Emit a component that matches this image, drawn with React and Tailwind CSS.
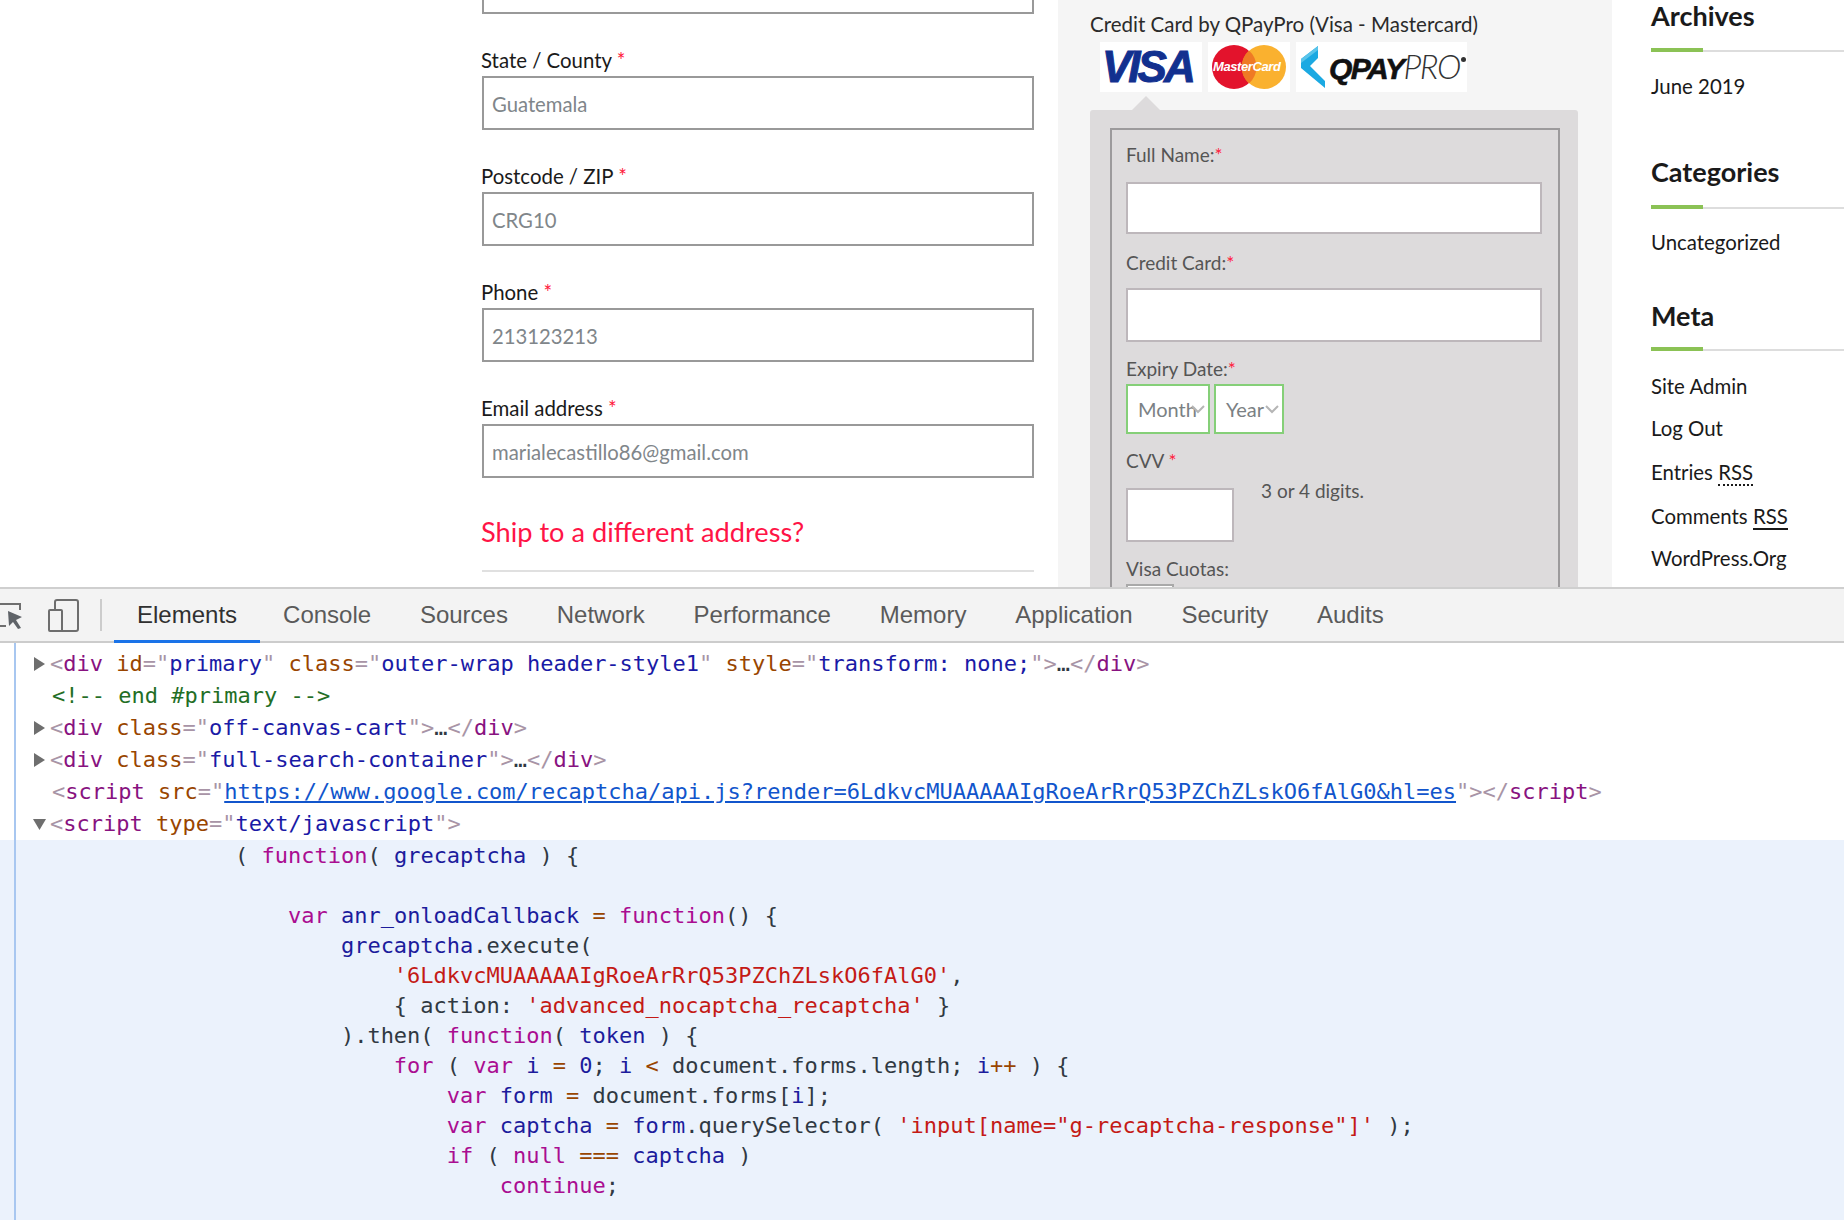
import React from "react";

/* ================= DEVTOOLS SOURCE ================= */
const TOKEN = {
  b: "text-[#a894a6]",
  t: "text-[#881280]",
  a: "text-[#994500]",
  v: "text-[#1a1aa6]",
  u: "text-[#1155cc] underline",
  c: "text-[#236e25]",
  p: "text-[#303942]",
  k: "text-[#aa0d91]",
  d: "text-[#1c1c9c]",
  s: "text-[#c41a16]",
  o: "text-[#994500]",
};

const KEY = "6LdkvcMUAAAAAIgRoeArRrQ53PZChZLskO6fAlG0";

const TOP_LINES = [
  { arrow: "right", tokens: [["b", "<"], ["t", "div"], ["a", " id"], ["b", '="'], ["v", "primary"], ["b", '"'], ["a", " class"], ["b", '="'], ["v", "outer-wrap header-style1"], ["b", '"'], ["a", " style"], ["b", '="'], ["v", "transform: none;"], ["b", '">'], ["p", "…"], ["b", "</"], ["t", "div"], ["b", ">"]] },
  { tokens: [["c", "<!-- end #primary -->"]] },
  { arrow: "right", tokens: [["b", "<"], ["t", "div"], ["a", " class"], ["b", '="'], ["v", "off-canvas-cart"], ["b", '">'], ["p", "…"], ["b", "</"], ["t", "div"], ["b", ">"]] },
  { arrow: "right", tokens: [["b", "<"], ["t", "div"], ["a", " class"], ["b", '="'], ["v", "full-search-container"], ["b", '">'], ["p", "…"], ["b", "</"], ["t", "div"], ["b", ">"]] },
  { tokens: [["b", "<"], ["t", "script"], ["a", " src"], ["b", '="'], ["u", `https://www.google.com/recaptcha/api.js?render=${KEY}&hl=es`], ["b", '">'], ["b", "</"], ["t", "script"], ["b", ">"]] },
  { arrow: "down", tokens: [["b", "<"], ["t", "script"], ["a", " type"], ["b", '="'], ["v", "text/javascript"], ["b", '">']] },
];

const sp = (n) => " ".repeat(n);

const JS_LINES = [
  [["p", sp(14) + "( "], ["k", "function"], ["p", "( "], ["d", "grecaptcha"], ["p", " ) {"]],
  [],
  [["k", sp(18) + "var"], ["d", " anr_onloadCallback"], ["o", " = "], ["k", "function"], ["p", "() {"]],
  [["d", sp(22) + "grecaptcha"], ["p", ".execute("]],
  [["s", sp(26) + `'${KEY}'`], ["p", ","]],
  [["p", sp(26) + "{ action: "], ["s", "'advanced_nocaptcha_recaptcha'"], ["p", " }"]],
  [["p", sp(22) + ").then( "], ["k", "function"], ["p", "( "], ["d", "token"], ["p", " ) {"]],
  [["k", sp(26) + "for"], ["p", " ( "], ["k", "var"], ["d", " i"], ["o", " = "], ["d", "0"], ["p", "; "], ["d", "i"], ["o", " < "], ["p", "document.forms.length; "], ["d", "i"], ["o", "++"], ["p", " ) {"]],
  [["k", sp(30) + "var"], ["d", " form"], ["o", " = "], ["p", "document.forms["], ["d", "i"], ["p", "];"]],
  [["k", sp(30) + "var"], ["d", " captcha"], ["o", " = "], ["d", "form"], ["p", ".querySelector( "], ["s", `'input[name="g-recaptcha-response"]'`], ["p", " );"]],
  [["k", sp(30) + "if"], ["p", " ( "], ["k", "null"], ["o", " === "], ["d", "captcha"], ["p", " )"]],
  [["k", sp(34) + "continue"], ["p", ";"]],
];

const Tokens = ({ tokens }) =>
  tokens.map(([kind, text], i) => (
    <span key={i} className={TOKEN[kind]}>
      {text}
    </span>
  ));

const Arrow = ({ dir }) => (
  <svg className="absolute left-[33px] top-[9px]" width="13" height="14" viewBox="0 0 13 14">
    {dir === "right" ? <polygon points="1,0 12,7 1,14" fill="#6e6e6e" /> : <polygon points="0,2 13,2 6.5,13" fill="#6e6e6e" />}
  </svg>
);

const TABS = ["Elements", "Console", "Sources", "Network", "Performance", "Memory", "Application", "Security", "Audits"];

const DevTools = () => (
  <div className="flex-1 flex flex-col bg-white border-t-2 border-[#cfcfcf] overflow-hidden">
    <div className="h-[54px] shrink-0 flex items-stretch bg-[#f3f3f3] border-b-2 border-[#cccccc]">
      <svg className="w-[114px] shrink-0" height="52" viewBox="0 0 114 52" fill="none">
        <path d="M0 15H20V21M0 37H6" stroke="#6e6e6e" strokeWidth="2" />
        <path d="M8 22L22 28L16 31L21 39L18 40L13 33L9 37Z" fill="#5f6368" />
        <rect x="55" y="11" width="23" height="31" rx="2" stroke="#6e6e6e" strokeWidth="2" fill="none" />
        <rect x="49" y="21" width="13" height="21" rx="1" stroke="#6e6e6e" strokeWidth="2" fill="#f3f3f3" />
        <rect x="100" y="10" width="2" height="32" fill="#cccccc" />
      </svg>
      {TABS.map((tab, i) => (
        <div
          key={tab}
          className={`relative flex items-center text-[24px] font-['Liberation_Sans',sans-serif] ${
            i === 0 ? "px-[23px] text-[#303030]" : "pl-[23px] pr-[25.8px] text-[#5a5a5a]"
          }`}
        >
          {tab}
          {i === 0 && <div className="absolute left-0 right-0 -bottom-[2px] h-[3px] bg-[#1a73e8]" />}
        </div>
      ))}
    </div>

    <div className="relative flex-1 pt-[5px] font-['DejaVu_Sans_Mono',monospace] text-[22px] whitespace-pre">
      {TOP_LINES.map((line, i) => (
        <div key={i} className={`relative h-[32px] leading-[32px] ${line.arrow ? "pl-[50px]" : "pl-[52px]"}`}>
          {line.arrow && <Arrow dir={line.arrow} />}
          <Tokens tokens={line.tokens} />
        </div>
      ))}
      <div className="bg-[#ebf2fc] h-full pl-[49.5px] pt-px">
        {JS_LINES.map((tokens, i) => (
          <div key={i} className="h-[30px] leading-[30px]">
            <Tokens tokens={tokens} />
          </div>
        ))}
      </div>
      <div className="absolute left-[14px] top-0 bottom-0 w-[2px] bg-[#a8c7f0]" />
    </div>
  </div>
);

/* ================= CHECKOUT FORM ================= */
const FIELDS = [
  { label: "State / County", value: "Guatemala" },
  { label: "Postcode / ZIP", value: "CRG10" },
  { label: "Phone", value: "213123213" },
  { label: "Email address", value: "marialecastillo86@gmail.com" },
];

const Field = ({ label, value }) => (
  <div className="mt-[35px]">
    <div className="h-[24px] leading-[22px] -ml-px text-[20.4px] text-[#1a1a1a]">
      {label}
      <span className="text-[#ff1a3c]"> *</span>
    </div>
    <div className="mt-[3px] h-[54px] border-2 border-[#999999] pl-[8px] pt-[3px] flex items-center text-[20.3px] text-[#80868a]">{value}</div>
  </div>
);

const CheckoutForm = () => (
  <div className="w-[1058px] shrink-0 pl-[482px] pr-[24px]">
    <div className="h-[14px] border-2 border-t-0 border-[#999999]" />
    {FIELDS.map((f) => (
      <Field key={f.label} {...f} />
    ))}
    <div className="mt-[37px] -ml-px h-[36px] leading-[34px] text-[27.2px] text-[#ff1446]">Ship to a different address?</div>
    <div className="mt-[19px] h-[2px] bg-[#e0e0e0]" />
  </div>
);

/* ================= PAYMENT PANEL ================= */
const PanelLabel = ({ className, children, star }) => (
  <div className={`h-[24px] leading-[24px] text-[19px] text-[#555555] ${className}`}>
    {children}
    {star && <span className="text-[#ff1a3c]">{star}</span>}
  </div>
);

const TextBox = ({ className }) => <div className={`h-[54px] border-2 border-[#bdb7bb] bg-white ${className}`} />;

const Chevron = () => (
  <svg className="absolute top-[19px] right-[3px]" width="14" height="9" viewBox="0 0 14 9" fill="none">
    <path d="M1 1L7 7L13 1" stroke="#b5b5b5" strokeWidth="2" />
  </svg>
);

const SelectBox = ({ label, width }) => (
  <div className={`relative h-[50px] border-2 border-[#85cf78] bg-white pl-[10px] flex items-center text-[20px] text-[#7b8184] ${width}`}>
    {label}
    <Chevron />
  </div>
);

const VisaLogo = () => (
  <div className="w-[102px] h-[50px] bg-white flex items-center pl-[2px]">
    <span className="font-['Liberation_Sans',sans-serif] font-bold italic text-[44px] tracking-[-3px] [-webkit-text-stroke:1px_#12308f] text-[#12308f] leading-none">VISA</span>
  </div>
);

const MasterLogo = () => (
  <div className="relative w-[82px] h-[50px] bg-white">
    <svg className="absolute left-[3px] top-[2px]" width="76" height="46" viewBox="0 0 76 46">
      <circle cx="23" cy="23" r="22" fill="#e3132c" />
      <circle cx="53" cy="23" r="22" fill="#fab12f" />
      <path d="M38 6.5A22 22 0 0 1 38 39.5A22 22 0 0 1 38 6.5Z" fill="#ef7a24" />
    </svg>
    <span className="absolute left-[5px] top-[14px] whitespace-nowrap font-['Liberation_Sans',sans-serif] font-bold italic text-[13px] leading-[22px] tracking-[-0.4px] text-white">
      MasterCard
    </span>
  </div>
);

const QPayLogo = () => (
  <div className="w-[171px] h-[50px] bg-white flex items-center pl-[5px]">
    <svg width="24" height="42" viewBox="0 0 24 42" className="shrink-0">
      <polygon points="0,13 17,0 17,12 9,20 24,35 24,42 0,22" fill="#1ba9e2" />
      <polygon points="0,13 17,0 17,4 0,17" fill="#5ac4ea" />
    </svg>
    <span className="ml-[4px] font-['Liberation_Sans',sans-serif] italic text-[30px] tracking-[-1.5px] leading-none text-[#111111]">
      <span className="font-bold [-webkit-text-stroke:0.6px_#111111]">QPAY</span>
      <span className="font-['Lato',sans-serif] font-light text-[33px] text-[#333333]">PRO</span>
    </span>
    <span className="ml-[1px] mb-[16px] w-[5px] h-[5px] rounded-full bg-[#333333] shrink-0" />
  </div>
);

const PaymentPanel = () => (
  <div className="w-[554px] shrink-0 bg-[#f5f5f5]">
    <div className="ml-[32px] mt-[10px] h-[30px] leading-[28px] text-[20.5px] text-[#2b2b2b]">Credit Card by QPayPro (Visa - Mastercard)</div>
    <div className="ml-[42px] mt-[2px] flex gap-[6px]">
      <VisaLogo />
      <MasterLogo />
      <QPayLogo />
    </div>
    <div className="relative ml-[32px] mt-[18px] w-[488px] h-[600px] bg-[#dddbdc] rounded-t-[3px] px-[20px] pt-[18px]">
      <div className="absolute left-[42px] -top-[14px] w-0 h-0 border-x-[14px] border-x-transparent border-b-[14px] border-b-[#dddbdc]" />
      <div className="w-[450px] h-[600px] border-2 border-[#9c9a9c] pl-[14px] pr-[16px] pt-[13px]">
        <PanelLabel star="*">Full Name:</PanelLabel>
        <TextBox className="mt-[15px] !h-[52px]" />
        <PanelLabel star="*" className="mt-[17px]">Credit Card:</PanelLabel>
        <TextBox className="mt-[13px]" />
        <PanelLabel star="*" className="mt-[15px]">Expiry Date:</PanelLabel>
        <div className="mt-[3px] flex gap-[4px]">
          <SelectBox label="Month" width="w-[84px]" />
          <SelectBox label="Year" width="w-[70px]" />
        </div>
        <PanelLabel star=" *" className="mt-[15px]">CVV</PanelLabel>
        <div className="mt-[15px] flex">
          <TextBox className="w-[108px]" />
          <div className="ml-[27px] -mt-[9px] h-[24px] leading-[24px] text-[19px] text-[#555555]">3 or 4 digits.</div>
        </div>
        <PanelLabel className="mt-[15px]">Visa Cuotas:</PanelLabel>
        <div className="mt-[3px] w-[48px] h-[30px] border-2 border-[#a9a9a9] bg-white" />
      </div>
    </div>
  </div>
);

/* ================= SIDEBAR ================= */
const Widget = ({ title, items, headGap, itemsGap, itemClass, className }) => (
  <div className={className}>
    <div className="h-[30px] leading-[30px] text-[27px] font-bold text-[#1a1a1a]">{title}</div>
    <div className={`flex items-end ${headGap}`}>
      <div className="w-[52px] h-[4px] bg-[#8bc255]" />
      <div className="flex-1 h-[2px] bg-[#dddddd]" />
    </div>
    <div className={`text-[20.4px] text-[#1a1a1a] ${itemsGap}`}>
      {items.map((item, i) => (
        <div key={i} className={itemClass}>
          {item}
        </div>
      ))}
    </div>
  </div>
);

const Sidebar = () => (
  <div className="flex-1 pl-[39px]">
    <Widget className="mt-px" title="Archives" headGap="mt-[17px]" itemsGap="mt-[19px]" itemClass="h-[30px] leading-[30px]" items={["June 2019"]} />
    <Widget className="mt-[56px]" title="Categories" headGap="mt-[18px]" itemsGap="mt-[18px]" itemClass="h-[30px] leading-[30px]" items={["Uncategorized"]} />
    <Widget
      className="mt-[44px]"
      title="Meta"
      headGap="mt-[16px]"
      itemsGap="mt-[14px]"
      itemClass="h-[43px] leading-[43px]"
      items={[
        "Site Admin",
        <span className="relative -top-px">Log Out</span>,
        <>
          Entries <span className="border-b-2 border-dotted border-[#1a1a1a]">RSS</span>
        </>,
        <span className="relative top-px">
          Comments <span className="border-b-2 border-[#1a1a1a]">RSS</span>
        </span>,
        "WordPress.Org",
      ]}
    />
  </div>
);

export default function App() {
  return (
    <div className="w-[1844px] h-[1220px] flex flex-col overflow-hidden bg-white font-['Lato',sans-serif]">
      <div className="h-[587px] shrink-0 flex overflow-hidden">
        <CheckoutForm />
        <PaymentPanel />
        <Sidebar />
      </div>
      <DevTools />
    </div>
  );
}
